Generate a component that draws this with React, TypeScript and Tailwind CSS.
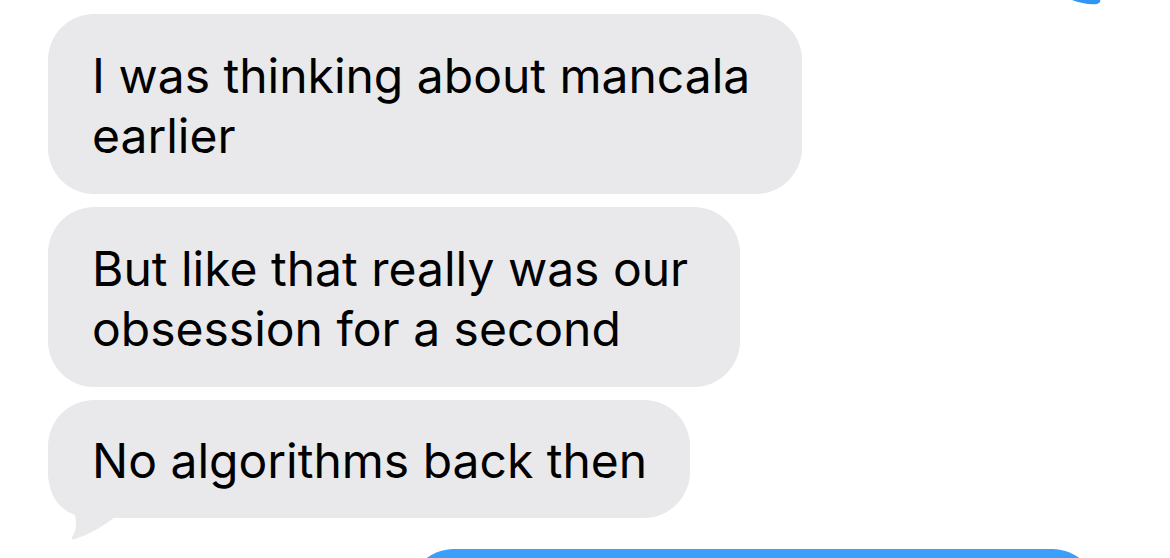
import React from "react"

const BubbleTail: React.FC = () => (
  <svg
    className="absolute left-0 bottom-[-24px]"
    width="70"
    height="72"
    viewBox="0 0 70 72"
    fill="#e9e9eb"
  >
    <path d="M0 0 C0 22 8 38 27 45 C29 54 28 62 24 67 C23 69 24 70 27 69 C40 65 52 58 66 48 L66 0 Z" />
  </svg>
)

const App: React.FC = () => {
  return (
    <div
      className="relative h-[558px] w-[1170px] overflow-hidden bg-white text-black"
      style={{ fontFamily: "Inter, 'Noto Sans', sans-serif" }}
    >
      {/* tail of the sent bubble above the view */}
      <svg className="absolute right-0 top-0" width="120" height="8" viewBox="1050 0 120 8">
        <path d="M1072 0 C1080 3 1090 5 1097 4 C1100 3 1101 1 1100 0 Z" fill="#2f96f6" />
      </svg>

      <div className="flex flex-col items-start gap-[13px] pl-[48px] pt-[14px]">
        <div className="w-[754px] whitespace-nowrap rounded-[46px] bg-[#e9e9eb] px-[44px] pb-[28px] pt-[32px] text-[48px] leading-[60px]">
          I was thinking about mancala
          <br />
          earlier
        </div>
        <div className="w-[692px] whitespace-nowrap rounded-[46px] bg-[#e9e9eb] px-[44px] pb-[28px] pt-[32px] text-[48px] leading-[60px]">
          But like that really was our
          <br />
          obsession for a second
        </div>
        <div className="relative w-[642px] whitespace-nowrap rounded-[46px] bg-[#e9e9eb] px-[44px] pb-[27px] pt-[31px] text-[48px] leading-[60px]">
          <BubbleTail />
          <span className="relative">No algorithms back then</span>
        </div>
        <div className="mr-[72px] mt-[18px] h-[120px] w-[690px] self-end rounded-[46px] bg-gradient-to-b from-[#3aa0fb] to-[#2b8ff5]" />
      </div>
    </div>
  )
}

export default App
